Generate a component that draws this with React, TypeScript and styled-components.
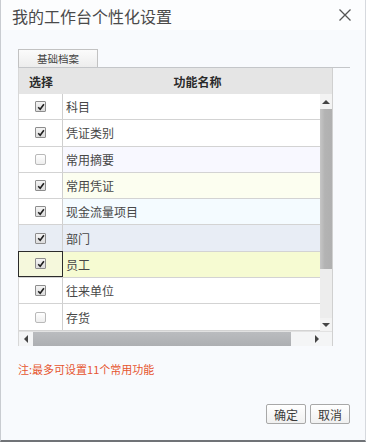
import React from "react";
import styled, { createGlobalStyle } from "styled-components";

const GlobalStyle = createGlobalStyle`
  html, body {
    margin: 0;
    padding: 0;
    background: #ffffff;
  }
  body {
    font-family: "Noto Sans CJK SC", "Noto Sans", sans-serif;
    color: #333333;
  }
`;

const Dialog = styled.div`
  width: 366px;
  height: 442px;
  box-sizing: border-box;
  display: flex;
  flex-direction: column;
  background: #f8fafd;
  border-left: 1px solid #c9ccd1;
  border-right: 1px solid #d6d9de;
  border-bottom: 2px solid #707377;
`;

const TitleBar = styled.div`
  height: 30px;
  display: flex;
  align-items: center;
  justify-content: space-between;
  padding: 0 13px 0 11px;
  background: #fcfdfe;
`;

const Title = styled.div`
  font-size: 16px;
  line-height: 16px;
  color: #4a4a4a;
  margin-top: 1px;
`;

const CloseButton = styled.div`
  width: 14px;
  height: 14px;
  display: flex;
  cursor: pointer;
`;

const Body = styled.div`
  flex: 1;
  display: flex;
  flex-direction: column;
  padding: 19px 15px 0 17px;
`;

const TabStrip = styled.div`
  display: flex;
  border-bottom: 1px solid #c4c6c9;
`;

const Tab = styled.div`
  width: 78px;
  height: 17px;
  border: 1px solid #c2c2c2;
  border-bottom: none;
  background: linear-gradient(#fbfbfb, #ededed);
  font-size: 10.5px;
  line-height: 17px;
  text-align: center;
  color: #444;
`;

const Grid = styled.div`
  width: 315px;
  box-sizing: border-box;
  border-left: 1px solid #d8d8d8;
  border-right: 1px solid #d0d0d0;
  display: flex;
  flex-direction: column;
`;

const HeaderRow = styled.div`
  height: 26px;
  display: grid;
  grid-template-columns: 44px 1fr;
  background: #e5e5e5;
  font-size: 12px;
  font-weight: bold;
  color: #2a2a2a;
`;

const HeaderCell = styled.div`
  display: flex;
  align-items: center;
  justify-content: center;
`;

const GridBody = styled.div`
  display: flex;
  height: 237px;
`;

const Rows = styled.div`
  width: 301px;
  display: flex;
  flex-direction: column;
`;

const Row = styled.div<{ $bg: string }>`
  height: 26.3px;
  box-sizing: border-box;
  display: grid;
  grid-template-columns: 44px 1fr;
  border-bottom: 1px solid #d3d3d3;
  background: ${(p) => p.$bg};
`;

const CheckCell = styled.div<{ $focus?: boolean; $bg?: string }>`
  display: flex;
  align-items: center;
  justify-content: center;
  box-sizing: border-box;
  border-right: 1px solid #cfcfcf;
  background: ${(p) => p.$bg || "#ffffff"};
  ${(p) => (p.$focus ? "border: 1px solid #2b2b2b; margin: -1px 0 0 -1px;" : "")}
`;

const NameCell = styled.div`
  display: flex;
  align-items: center;
  padding-left: 3px;
  font-size: 12px;
  color: #474747;
`;

const Box = styled.span<{ $checked: boolean }>`
  width: 9px;
  height: 9px;
  border: 1px solid ${(p) => (p.$checked ? "#8d8d8d" : "#b9b9b9")};
  border-radius: ${(p) => (p.$checked ? "1px" : "2px")};
  background: ${(p) =>
    p.$checked ? "linear-gradient(#f4f4f4, #dcdcdc)" : "linear-gradient(#ffffff, #eeeeee)"};
  display: flex;
  align-items: center;
  justify-content: center;
`;

const VScroll = styled.div`
  width: 12px;
  display: flex;
  flex-direction: column;
  background: #ededed;
`;

const ArrowBox = styled.div<{ $h: number }>`
  height: ${(p) => p.$h}px;
  display: flex;
  align-items: center;
  justify-content: center;
  background: #f3f3f3;
`;

const VThumb = styled.div`
  height: 160px;
  background: linear-gradient(90deg, #c6c6c6, #b3b3b3 40%, #b0b0b0);
`;

const Spacer = styled.div`
  flex: 1;
`;

const HScroll = styled.div`
  height: 14px;
  display: flex;
  align-items: stretch;
  background: #f4f5f6;
  border-top: 1px solid #e2e2e2;
`;

const HArrow = styled.div<{ $w: number }>`
  width: ${(p) => p.$w}px;
  display: flex;
  align-items: center;
  justify-content: center;
`;

const HThumb = styled.div`
  width: 258px;
  background: linear-gradient(#babcbf, #adafb2);
`;

const Note = styled.div`
  margin-top: 16px;
  font-size: 11px;
  line-height: 14px;
  color: #e6552f;
`;

const Footer = styled.div`
  margin-top: 28px;
  display: flex;
  justify-content: flex-end;
  gap: 4px;
`;

const Button = styled.button`
  width: 40px;
  height: 20px;
  padding: 0;
  border: 1px solid #a8a8a8;
  border-radius: 2px;
  background: linear-gradient(#ffffff, #f0f0f0);
  font-family: "Noto Sans CJK SC", sans-serif;
  font-size: 12px;
  color: #3a3a3a;
  cursor: pointer;
`;

const items = [
  { name: "科目", checked: true, bg: "#ffffff" },
  { name: "凭证类别", checked: true, bg: "#ffffff" },
  { name: "常用摘要", checked: false, bg: "#f8f8ff" },
  { name: "常用凭证", checked: true, bg: "#fcfef0" },
  { name: "现金流量项目", checked: true, bg: "#f4fbff" },
  { name: "部门", checked: true, bg: "#e8edf5", cellBg: "#e8edf4" },
  { name: "员工", checked: true, bg: "#f6fbd2", cellBg: "#f5f8dc", focus: true },
  { name: "往来单位", checked: true, bg: "#ffffff" },
  { name: "存货", checked: false, bg: "#ffffff" },
];

const CheckBox = ({ checked }: { checked: boolean }) => (
  <Box $checked={checked}>
    {checked && (
      <svg width="8" height="8" viewBox="0 0 8 8">
        <path d="M1.2 4.2 L3.2 6.2 L6.9 1.2" fill="none" stroke="#1f1f1f" strokeWidth="1.6" />
      </svg>
    )}
  </Box>
);

const Triangle = ({ dir }: { dir: "up" | "down" | "left" | "right" }) => {
  const pts = {
    up: "0,5 4,1 8,5",
    down: "0,1 8,1 4,5",
    left: "5,0 5,8 1,4",
    right: "1,0 1,8 5,4",
  }[dir];
  const vertical = dir === "up" || dir === "down";
  return (
    <svg width={vertical ? 8 : 6} height={vertical ? 6 : 8} viewBox={vertical ? "0 0 8 6" : "0 0 6 8"}>
      <polygon points={pts} fill="#444" />
    </svg>
  );
};

const App = () => {
  return (
    <>
      <GlobalStyle />
      <Dialog>
        <TitleBar>
          <Title>我的工作台个性化设置</Title>
          <CloseButton>
            <svg width="14" height="14" viewBox="0 0 14 14">
              <path d="M1.5 1.5 L12.5 12.5 M12.5 1.5 L1.5 12.5" stroke="#555" strokeWidth="1.3" />
            </svg>
          </CloseButton>
        </TitleBar>
        <Body>
          <TabStrip>
            <Tab>基础档案</Tab>
          </TabStrip>
          <Grid>
            <HeaderRow>
              <HeaderCell>选择</HeaderCell>
              <HeaderCell>功能名称</HeaderCell>
            </HeaderRow>
            <GridBody>
              <Rows>
                {items.map((it) => (
                  <Row key={it.name} $bg={it.bg}>
                    <CheckCell $focus={it.focus} $bg={it.cellBg}>
                      <CheckBox checked={it.checked} />
                    </CheckCell>
                    <NameCell>{it.name}</NameCell>
                  </Row>
                ))}
              </Rows>
              <VScroll>
                <ArrowBox $h={15}>
                  <Triangle dir="up" />
                </ArrowBox>
                <VThumb />
                <Spacer />
                <ArrowBox $h={13}>
                  <Triangle dir="down" />
                </ArrowBox>
              </VScroll>
            </GridBody>
            <HScroll>
              <HArrow $w={14}>
                <Triangle dir="left" />
              </HArrow>
              <HThumb />
              <Spacer />
              <HArrow $w={30}>
                <Triangle dir="right" />
              </HArrow>
            </HScroll>
          </Grid>
          <Note>注:最多可设置11个常用功能</Note>
          <Footer>
            <Button>确定</Button>
            <Button>取消</Button>
          </Footer>
        </Body>
      </Dialog>
    </>
  );
};

export default App;
